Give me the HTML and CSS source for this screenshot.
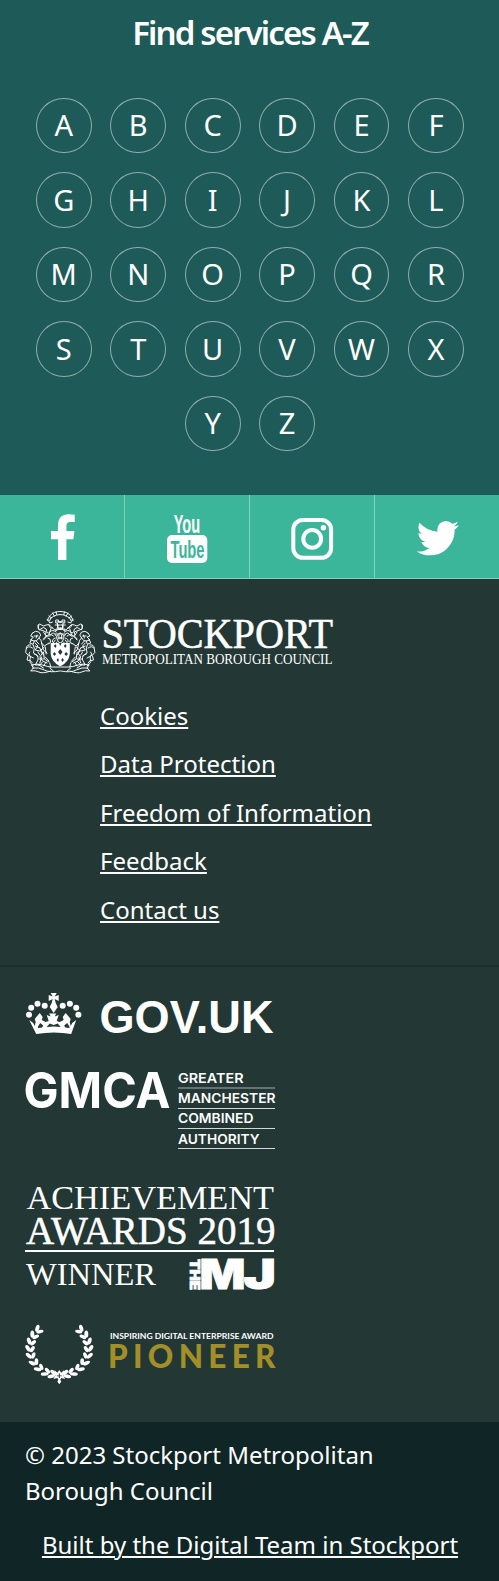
FILE: index.html
```html
<!DOCTYPE html>
<html lang="en">
<head>
<meta charset="utf-8">
<title>Stockport Council</title>
<link rel="stylesheet" href="styles.css">
</head>
<body>
<section class="az">
  <h2 class="az-title">Find services A-Z</h2>
  <ul class="az-list">
    <li><a>A</a></li><li><a>B</a></li><li><a>C</a></li><li><a>D</a></li><li><a>E</a></li><li><a>F</a></li>
    <li><a>G</a></li><li><a>H</a></li><li><a>I</a></li><li><a>J</a></li><li><a>K</a></li><li><a>L</a></li>
    <li><a>M</a></li><li><a>N</a></li><li><a>O</a></li><li><a>P</a></li><li><a>Q</a></li><li><a>R</a></li>
    <li><a>S</a></li><li><a>T</a></li><li><a>U</a></li><li><a>V</a></li><li><a>W</a></li><li><a>X</a></li>
    <li><a>Y</a></li><li><a>Z</a></li>
  </ul>
</section>

<nav class="social">
  <a class="social-cell" aria-label="Facebook">
    <svg width="124" height="83" viewBox="0 0 124 83"><path transform="translate(37.800 19.300) scale(.0275)" d="M1343 12v264h-157q-86 0-116 36t-30 108v189h293l-39 296h-254v759h-306v-759h-255v-296h255v-218q0-186 104-288.500t277-102.500q147 0 228 12z"/></svg>
  </a>
  <a class="social-cell" aria-label="YouTube">
    <svg width="124" height="83" viewBox="0 0 124 83">
      <text class="yt" x="48.700" y="38" font-size="25.500" textLength="26.500" lengthAdjust="spacingAndGlyphs">You</text>
      <rect x="42" y="40" width="40.300" height="28" rx="5"/>
      <text class="yt yt-cut" x="45.500" y="62.500" font-size="24" textLength="34" lengthAdjust="spacingAndGlyphs">Tube</text>
    </svg>
  </a>
  <a class="social-cell" aria-label="Instagram">
    <svg width="124" height="83" viewBox="0 0 124 83"><g fill="none" stroke="#fff" stroke-width="4"><rect x="43.300" y="25" width="37.800" height="37.800" rx="9.500"/><circle cx="62.200" cy="43.900" r="8.900"/></g><circle cx="73.400" cy="32.700" r="2.700"/></svg>
  </a>
  <a class="social-cell" aria-label="Twitter">
    <svg width="124" height="83" viewBox="0 0 124 83"><path transform="translate(38.800 19.200) scale(.0268)" d="M1684 408q-67 98-162 167 1 14 1 42 0 130-38 259.500t-115.500 248.500-184.500 210.500-258 146-323 54.500q-271 0-496-145 35 4 78 4 225 0 401-138-105-2-188-64.500t-114-159.500q33 5 61 5 43 0 85-11-112-23-185.500-111.500t-73.500-205.500v-4q68 38 146 41-66-44-105-115t-39-154q0-88 44-163 121 149 294.500 238.500t371.500 99.500q-8-38-8-74 0-134 94.500-228.500t228.500-94.500q140 0 236 102 109-21 205-78-37 115-142 178 93-10 186-50z"/></svg>
  </a>
</nav>

<footer class="footer">
  <div class="footer-top">
    <svg class="logo" width="310" height="67" viewBox="0 0 310 67">
      <defs>
        <g id="crest-half" fill="none" stroke="#fff" stroke-width="1" stroke-linecap="round">
          <path d="M40.500 6.500q-8 0-11 4l-3 4 2.500 1 1-2.500 3-1.500q3-2 7.500-2M28 11l3 2M32 8l2 3M36 7l.5 2.500M26 15q3 1 3 3l3-1"/>
          <path d="M40.500 17l-2 0v-2h-3v3h2v5h3M35 20h5M36 24h5M35 26q3-2 6-2M35 29h5"/>
          <path d="M36 27q-4-3-7 0t-4-3q-3-3-6 0t-3-4q2-2 4 0t5 0 6 2 5 3M33 31q-4-3-7 0t-4 4M17 20q-2 4 2 5t6 2q-2 3 1 4t5-2 5 2M28 20q1 4 4 3M35 33q-4 1-3 4M22 27l3 4-3 3M30 24l-2 6M27 33q3 0 3 4l-2 2"/>
          <path d="M40.500 28q-4 1-4 5l2 4 2 1M38 33h3M35 35l-3 4M37 37l-2 2M37 17h4M38 20v4M39 30v4"/>
          <path d="M10 28q3-3 7-1l2 3-2 3q3 2 3 5l3 3 5-3M10 28l-2 3 3 1-3 3 4 1q-3 4 0 7l-1 5 5 3M17 33q-2 4-5 3M13 38l3 3-3 4 5 1 5-4M20 38l2 7 4 3M15 30l-1 3M18 43l3 5-3 4 3 4 5 2M12 49q5 1 4 6l-3 5h5l3-3M22 47l1 7 5 3M24 42l1 7M16 47l2 3M20 52l-2 6M12 31h4M14 36l3 3M13 41l5 2M19 46l3 4M17 54h5M24 52l4 4"/>
          <path d="M10 43q-5-3-7 1t2 6q4 1 2 5l3 3M3 43q1-4 5-3M7 47q-2 2 0 4l4 2M5 51l-1 4 4 1M7 57l4 4M9 34l-2 4 3 1"/>
          <path d="M9 60q6-2 12 0t11 2l8 0M10 63q7-1 13 2t17 1M9 60l2 3-3 3q5-1 9 1t13-1M25 57l-3 4M29 58l1 4M17 60l5 3M29 63l4 3"/>
        </g>
        <g id="sprig">
          <ellipse cx="-32" cy="-1.500" rx="2" ry="4" transform="rotate(-28 -32 -1.500)"/>
          <ellipse cx="-27.500" cy="-.5" rx="1.900" ry="3.700" transform="rotate(32 -27.500 -.5)"/>
        </g>
        <g id="branch">
          <use href="#sprig" transform="rotate(43)"/><use href="#sprig" transform="rotate(28)"/><use href="#sprig" transform="rotate(13)"/><use href="#sprig" transform="rotate(-2)"/><use href="#sprig" transform="rotate(-17)"/><use href="#sprig" transform="rotate(-33)"/><use href="#sprig" transform="rotate(-49)"/><use href="#sprig" transform="rotate(-65)"/><use href="#sprig" transform="rotate(-78)"/>
        </g>
      </defs>
      <g transform="translate(-1.600 -3) scale(.91 1)">
        <use href="#crest-half"/><use href="#crest-half" transform="translate(81 0) scale(-1 1)"/>
        <path d="M30 38h21v11q-1 8-10.500 12.500Q31 57 30 49z"/>
        <g fill="#233735"><path d="M35 39l1.500 2-1.500 2-1.500-2zM46 39l1.500 2-1.500 2-1.500-2zM40.500 44l2.500 3-2.500 3-2.500-3zM34 47l2 2-2 2-1.500-2zM47 47l2 2-2 2-2-2zM38 53l1 2-1 2-1.500-2zM43 53l1.500 2-1.500 2-1.500-2zM39 38h3l-1.500 3z"/></g>
      </g>
      <text class="serif firm" x="76.500" y="39.500" font-size="42.500" textLength="231.500" lengthAdjust="spacingAndGlyphs">STOCKPORT</text>
      <text class="serif" x="77" y="56" font-size="14" textLength="230.500" lengthAdjust="spacingAndGlyphs">METROPOLITAN BOROUGH COUNCIL</text>
    </svg>
    <ul class="links">
      <li><a>Cookies</a></li>
      <li><a>Data Protection</a></li>
      <li><a>Freedom of Information</a></li>
      <li><a>Feedback</a></li>
      <li><a>Contact us</a></li>
    </ul>
  </div>
  <div class="partners">
    <svg class="logo" width="252" height="46" viewBox="0 0 252 46">
      <g transform="translate(28.700 0)">
        <circle cx="-24.700" cy="24.700" r="3"/><circle cx="-22.500" cy="17.700" r="3"/><circle cx="-16.200" cy="13.700" r="3"/><circle cx="-9" cy="15.700" r="3"/>
        <circle cx="24.700" cy="24.700" r="3"/><circle cx="22.500" cy="17.700" r="3"/><circle cx="16.200" cy="13.700" r="3"/><circle cx="9" cy="15.700" r="3"/>
        <path d="M-3 3h6l-2 3.500 4-1.500v6l-4-2 1 4 2 4-4 6-4-6 2-4 1-4-4 2V5l4 1.500z"/>
        <path d="M-24.500 30l4 3 1.500 3 1-4-1-3 5-6 3 4-1 3 4 2 3-1-2-6 4 1.500-1.500-3h7l-1.500 3 4-1.500-2 6 3 1 4-2-1-3 3-4 5 6-1 3 1 4 1.500-3 4-3-5 14q-17-3-35 0z"/>
        <path class="cut" d="M-16 37l2.500-4 3 2.500-1 2-4 .5zM16 37l-2.500-4-3 2.500 1 2 4 .5zM-7 37l3-3.500 4 1.500 4-1.500 3 3.500q-7-.8-14 0z"/>
      </g>
      <text class="sans" x="74.500" y="43" font-size="46" textLength="174" lengthAdjust="spacingAndGlyphs">GOV.UK</text>
    </svg>
    <svg class="logo logo-gmca" width="252" height="86" viewBox="0 0 252 86">
      <g class="inter">
        <text x="-1.500" y="43" font-size="49.500" textLength="147" lengthAdjust="spacingAndGlyphs">GMCA</text>
        <g font-size="13.500">
          <text x="153" y="17.700" textLength="65.500" lengthAdjust="spacingAndGlyphs">GREATER</text>
          <text x="153" y="38.300" textLength="97.500" lengthAdjust="spacingAndGlyphs">MANCHESTER</text>
          <text x="153" y="58.300" textLength="75.500" lengthAdjust="spacingAndGlyphs">COMBINED</text>
          <text x="153" y="79" textLength="81.500" lengthAdjust="spacingAndGlyphs">AUTHORITY</text>
        </g>
      </g>
      <path opacity=".3" d="M153 22h97v2h-97z"/>
      <path opacity=".8" d="M153 43h97v1h-97zM153 63h97v1h-97zM153 83h97v1h-97z"/>
    </svg>
    <svg class="logo logo-mj" width="252" height="108" viewBox="0 0 252 108">
      <g class="serif">
        <text x="1.500" y="26" font-size="33.500" textLength="247.500" lengthAdjust="spacingAndGlyphs">ACHIEVEMENT</text>
        <text class="firm" x="1" y="60.700" font-size="41" textLength="249.500" lengthAdjust="spacingAndGlyphs">AWARDS 2019</text>
        <text x="1" y="102.300" font-size="32" textLength="130" lengthAdjust="spacingAndGlyphs">WINNER</text>
      </g>
      <path d="M0 67h249v2H0z"/>
      <text class="black" x="174.500" y="106" font-size="41.500" textLength="46" lengthAdjust="spacingAndGlyphs">M</text>
      <text class="black" x="218.500" y="106" font-size="41.500" textLength="32.500" lengthAdjust="spacingAndGlyphs">J</text>
      <text class="black" transform="translate(165 76) rotate(90)" font-size="13" textLength="31" lengthAdjust="spacingAndGlyphs">THE</text>
    </svg>
    <svg class="logo logo-idea" width="252" height="64" viewBox="0 0 252 64">
      <g transform="translate(34.300 25.700) scale(.98 .89)">
        <use href="#branch"/><use href="#branch" transform="scale(-1 1)"/>
        <path d="M-5 24l3 3 2-3 2 3 3-3-1 6 2 4-4-1-1 2 1 2-2 3-2-3 1-2-1-2-4 1 2-4z"/>
        <path class="cut" d="M-.5 28h1v2h2v1h-2v2h-1v-2h-2v-1h2z"/>
      </g>
      <text class="idea" x="85" y="16" font-size="7.300" textLength="163.500" lengthAdjust="spacingAndGlyphs">INSPIRING DIGITAL ENTERPRISE AWARD</text>
      <text class="pioneer" x="83" y="44.800" font-size="31.500" textLength="167.500">PIONEER</text>
    </svg>
  </div>
  <div class="legal">
    <p class="copyright">© 2023 Stockport Metropolitan Borough Council</p>
    <p class="built"><a>Built by the Digital Team in Stockport</a></p>
  </div>
</footer>
</body>
</html>
```

FILE: styles.css
```css
* { box-sizing: border-box; }
body {
  margin: 0;
  font: 24px/36px "Noto Sans", sans-serif;
  color: #fff;
  background: #102626;
}
ul { list-style: none; margin: 0; padding: 0; }
p, h2 { margin: 0; }
svg { display: block; fill: #fff; }

.az { height: 495px; padding-top: 8px; background: #1e5b58; }
.az-title {
  font-size: 33px;
  line-height: 49px;
  font-weight: 600;
  letter-spacing: -1.85px;
  text-align: center;
  padding-left: 1px;
}
.az-list {
  display: flex;
  flex-wrap: wrap;
  justify-content: center;
  gap: 18.95px 18.65px;
  padding: 40.9px 34.600px 0 35.300px;
}
.az-list a {
  display: flex;
  align-items: center;
  justify-content: center;
  width: 55.8px;
  height: 55.5px;
  padding-bottom: .5px;
  border: 1px solid rgba(255, 255, 255, .5);
  border-radius: 50%;
  font-size: 29px;
}

.social {
  display: grid;
  grid-template-columns: 125px 125px 125px 124px;
  height: 84px;
  background: #3cb69b;
  border-bottom: 1px solid #81cfbd;
}
.social-cell + .social-cell { box-shadow: -1px 0 #81cfbd; }
.yt { font-family: "Liberation Sans", sans-serif; font-weight: 700; }
.yt-cut { fill: #3cb69b; }

.footer { background: #233735; }
.footer-top { height: 388px; padding: 29px 25px 0; border-bottom: 2px solid #1b2f2d; }
.links { padding: 22.8px 0 0 75px; }
.links li { height: 48.5px; }
.footer a { text-decoration: underline; text-decoration-thickness: 2px; text-underline-offset: 2px; }

.partners { height: 455px; padding: 23px 25px 0; }
.logo-gmca { margin-top: 29px; }
.logo-mj { margin-top: 32px; }
.logo-idea { margin-top: 32px; }
.logo { overflow: visible; }
.cut { fill: #233735; }
.serif { font-family: "Liberation Serif", serif; }
.firm { stroke: #fff; stroke-width: .5px; }
.sans { font-family: "Liberation Sans", sans-serif; font-weight: 700; }
.inter { font-family: Inter, sans-serif; font-weight: 700; }
.inter g { font-weight: 600; }
.black { font-family: Inter, sans-serif; font-weight: 900; stroke: #fff; stroke-width: .8px; }
.idea { font-family: Lato, sans-serif; font-weight: 700; }
.pioneer { font-family: Lato, sans-serif; font-weight: 900; fill: #a38f27; }

.legal { height: 159px; padding: 15px 25px 0; background: #102626; }
.copyright { max-width: 400px; }
.built { padding: 18px 0 0 1px; text-align: center; }
```
